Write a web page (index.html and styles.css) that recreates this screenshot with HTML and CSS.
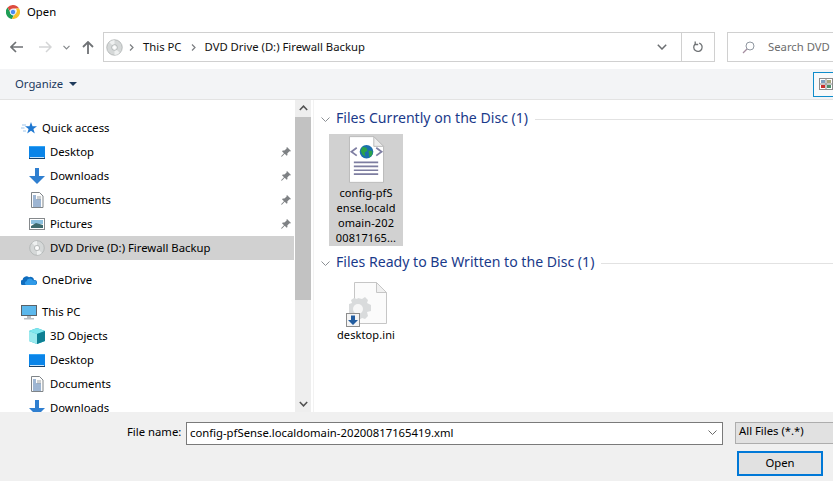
FILE: index.html
```html
<!DOCTYPE html>
<html lang="en">
<head>
<meta charset="utf-8">
<title>Open</title>
<link rel="stylesheet" href="styles.css">
</head>
<body>
<svg class="defs" width="0" height="0" aria-hidden="true">
  <defs>
    <symbol id="disc" viewBox="0 0 18 18">
      <circle cx="9" cy="9" r="8.2" fill="#d5d8d8" stroke="#a9adad" stroke-width=".8"/>
      <path d="M9 9 3.500 3.500A8 8 0 0 1 9 1Z" fill="#eef0f0"/>
      <path d="M9 9 14.500 14.500A8 8 0 0 1 9 17Z" fill="#eef0f0"/>
      <circle cx="9" cy="9" r="3" fill="#f4f5f5" stroke="#9da2a2" stroke-width=".7"/>
      <circle cx="9" cy="9" r="1.200" fill="#fff"/>
    </symbol>
    <symbol id="desktop" viewBox="0 0 16 14">
      <rect x="0" y="1" width="16" height="12" fill="#0a84e8"/>
      <rect x="0" y="1" width="16" height="1" fill="#35a4f4"/>
      <rect x="1" y="12" width="14" height="1" fill="#c8e4fa"/>
      <rect x="0" y="13" width="16" height="1" fill="#1c3f63"/>
    </symbol>
    <symbol id="down" viewBox="0 0 16 16">
      <path d="M6 0h4v8h6l-8 8-8-8h6Z" fill="#2f7fd0"/>
    </symbol>
    <symbol id="doc" viewBox="0 0 14 16">
      <path d="M1.500.5h8l3.500 3.500v11.500h-11.500Z" fill="#fdfdfd" stroke="#7f8488"/>
      <path d="M3 4h3M3 6h3M3 8h8M3 10h8M3 12h8M3 14h8" stroke="#3f6fa8"/>
      <path d="M7 5h4M7 7h4" stroke="#9aa0a4"/>
    </symbol>
    <symbol id="pin" viewBox="0 0 10 10">
      <path d="M6 0l4 4-1 .6-.6-.3L6.300 6.400l.2 1.600-.8.8-2-2L.8 9.800 0 9.200l3-3-2-2 .8-.8 1.600.2L5.700 1.600l-.3-.6Z" fill="#7e8184"/>
    </symbol>
  </defs>
</svg>

<header class="title-bar">
  <svg class="chrome" viewBox="0 0 14 14" width="14" height="14" aria-hidden="true">
    <path d="M7 0a7 7 0 0 1 6.100 3.500H7a3.500 3.500 0 0 0-3.300 2.400L1.500 2.500A7 7 0 0 1 7 0Z" fill="#dd4b3e"/>
    <path d="M1.500 2.500 4 7a3.500 3.500 0 0 0 3.800 3.400L5.900 13.900A7 7 0 0 1 1.500 2.500Z" fill="#1f9d55"/>
    <path d="M13.100 3.500A7 7 0 0 1 5.900 13.900l3-4.800A3.500 3.500 0 0 0 9.700 3.500Z" fill="#f6c32c"/>
    <circle cx="7" cy="7" r="2.700" fill="#4b8bf0" stroke="#fff" stroke-width=".7"/>
  </svg>
  <span class="title-text">Open</span>
</header>

<nav class="nav-row">
  <div class="nav-buttons">
    <svg class="nav-back" viewBox="0 0 13 12" width="13" height="12" aria-hidden="true"><path d="M6 1 1 6l5 5M1 6h12" fill="none" stroke="#6f7275" stroke-width="1.700"/></svg>
    <svg class="nav-fwd" viewBox="0 0 13 12" width="13" height="12" aria-hidden="true"><path d="M7 1l5 5-5 5M12 6H0" fill="none" stroke="#d4d5d6" stroke-width="1.500"/></svg>
    <svg class="nav-recent" viewBox="0 0 7 5" width="7" height="5" aria-hidden="true"><path d="M.5.800 3.500 3.800 6.500.800" fill="none" stroke="#85888b" stroke-width="1.200"/></svg>
    <svg class="nav-up" viewBox="0 0 12 13" width="12" height="13" aria-hidden="true"><path d="M1 6l5-5 5 5M6 1v12" fill="none" stroke="#6f7275" stroke-width="1.800"/></svg>
  </div>
  <div class="address">
    <svg class="addr-disc" width="17" height="17" aria-hidden="true"><use href="#disc"/></svg>
    <svg class="crumb-sep first" viewBox="0 0 5 7" width="5" height="7" aria-hidden="true"><path d="M1 .5 4 3.500 1 6.500" fill="none" stroke="#7b7e81" stroke-width="1.200"/></svg>
    <span class="crumb">This PC</span>
    <svg class="crumb-sep" viewBox="0 0 5 7" width="5" height="7" aria-hidden="true"><path d="M1 .5 4 3.500 1 6.500" fill="none" stroke="#7b7e81" stroke-width="1.200"/></svg>
    <span class="crumb">DVD Drive (D:) Firewall Backup</span>
    <svg class="addr-drop" viewBox="0 0 10 6" width="10" height="6" aria-hidden="true"><path d="M.8.800 5 5 9.200.800" fill="none" stroke="#6b6e71" stroke-width="1.500"/></svg>
    <div class="addr-refresh">
      <svg viewBox="0 0 12 12" width="12" height="12" aria-hidden="true"><path d="M7.200 2.200A4.200 4.200 0 1 1 3 3.200" fill="none" stroke="#6f7275" stroke-width="1.300"/><path d="M3.200 .5v3h3" fill="none" stroke="#6f7275" stroke-width="1.300"/></svg>
    </div>
  </div>
  <div class="search">
    <svg viewBox="0 0 13 13" width="13" height="13" aria-hidden="true"><circle cx="8" cy="5" r="4" fill="none" stroke="#8f97a0"/><path d="M5 8 1 12" stroke="#a58ea0" stroke-width="1.200"/></svg>
    <span class="search-text">Search DVD</span>
  </div>
</nav>

<div class="toolbar">
  <span class="organize">Organize</span>
  <svg class="caret" viewBox="0 0 8 4" width="8" height="4" aria-hidden="true"><path d="M0 0h8L4 4Z" fill="#1f3a5c"/></svg>
  <div class="view-btn">
    <svg viewBox="0 0 14 12" width="14" height="12" aria-hidden="true">
      <rect x=".5" y=".5" width="13" height="11" fill="#fff" stroke="#8c8c8c"/>
      <path d="M7 .5v11M.5 6h13" stroke="#8c8c8c"/>
      <rect x="2" y="2" width="4" height="3" fill="#7d9fbf"/><rect x="8" y="2" width="4" height="3" fill="#a7a57c"/>
      <rect x="2" y="7" width="4" height="3" fill="#c9302c"/><rect x="8" y="7" width="4" height="3" fill="#4f8f6a"/>
    </svg>
  </div>
</div>

<main class="main">
  <aside class="tree">
    <ul class="tree-list">
      <li class="row root">
        <svg class="ic" viewBox="0 0 16 15" width="16" height="15" aria-hidden="true"><path d="M10 1l1.500 4.300H16l-3.600 2.700 1.400 4.500L10 9.800 6.200 12.500 7.600 8 4 5.300h4.500Z" fill="#1f78d1"/><path d="M5 4H1M3.500 7H0M5 10H2" stroke="#9cc4ea"/></svg>
        <span>Quick access</span>
      </li>
      <li class="row child"><svg class="ic" width="16" height="14" aria-hidden="true"><use href="#desktop"/></svg><span>Desktop</span><svg class="pin" width="10" height="10" aria-hidden="true"><use href="#pin"/></svg></li>
      <li class="row child"><svg class="ic" width="16" height="16" aria-hidden="true"><use href="#down"/></svg><span>Downloads</span><svg class="pin" width="10" height="10" aria-hidden="true"><use href="#pin"/></svg></li>
      <li class="row child"><svg class="ic ic-doc" width="14" height="16" aria-hidden="true"><use href="#doc"/></svg><span>Documents</span><svg class="pin" width="10" height="10" aria-hidden="true"><use href="#pin"/></svg></li>
      <li class="row child">
        <svg class="ic" viewBox="0 0 16 14" width="16" height="14" aria-hidden="true"><rect x=".5" y="1.500" width="15" height="11" fill="#fff" stroke="#85898c"/><rect x="2" y="3" width="12" height="4" fill="#8cc0de"/><path d="M2 9l5-3 7 2v3H2Z" fill="#3d6a6e"/></svg>
        <span>Pictures</span><svg class="pin" width="10" height="10" aria-hidden="true"><use href="#pin"/></svg>
      </li>
      <li class="row child selected"><svg class="ic" width="16" height="16" aria-hidden="true"><use href="#disc"/></svg><span>DVD Drive (D:) Firewall Backup</span></li>
      <li class="row root spaced">
        <svg class="ic" viewBox="0 0 16 10" width="16" height="10" aria-hidden="true"><path d="M2 10A2.500 2.500 0 0 1 1.500 5 4 4 0 0 1 8 2.200 3.500 3.500 0 0 1 13 5a2.500 2.500 0 0 1 1 5Z" fill="#0f6cbd"/><path d="M5 10a2 2 0 0 1 .5-3.800A3.500 3.500 0 0 1 12 5.500a2.300 2.300 0 0 1 2 4.500Z" fill="#2f9ae8"/></svg>
        <span>OneDrive</span>
      </li>
      <li class="row root spaced">
        <svg class="ic" viewBox="0 0 16 15" width="16" height="15" aria-hidden="true"><rect x=".5" y=".5" width="15" height="10" fill="#5cb8ec" stroke="#5a6268"/><path d="M6 11h4v2H6ZM3 13h10v1.500H3Z" fill="#b9bec2"/></svg>
        <span>This PC</span>
      </li>
      <li class="row child">
        <svg class="ic" viewBox="0 0 16 16" width="16" height="16" aria-hidden="true"><path d="M8 0l8 3v10l-8 3-8-3V3Z" fill="#22b9c9"/><path d="M0 3l8 3 8-3-8-3Z" fill="#7fe6ee"/><path d="M8 6l8-3v10l-8 3Z" fill="#0e7f93"/><path d="M0 3l8 3v10l-8-3Z" fill="#9ae9ee"/></svg>
        <span>3D Objects</span>
      </li>
      <li class="row child"><svg class="ic" width="16" height="14" aria-hidden="true"><use href="#desktop"/></svg><span>Desktop</span></li>
      <li class="row child"><svg class="ic ic-doc" width="14" height="16" aria-hidden="true"><use href="#doc"/></svg><span>Documents</span></li>
      <li class="row child"><svg class="ic" width="16" height="16" aria-hidden="true"><use href="#down"/></svg><span>Downloads</span></li>
    </ul>
  </aside>
  <div class="scrollbar">
    <svg class="sb-arrow" viewBox="0 0 9 6" width="9" height="6" aria-hidden="true"><path d="M.8 5 4.500 1.200 8.200 5" fill="none" stroke="#505050" stroke-width="1.500"/></svg>
    <div class="sb-thumb"></div>
    <div class="sb-track"></div>
    <svg class="sb-arrow" viewBox="0 0 9 6" width="9" height="6" aria-hidden="true"><path d="M.8 1 4.500 4.800 8.200 1" fill="none" stroke="#505050" stroke-width="1.500"/></svg>
  </div>
  <section class="files">
    <div class="group-head">
      <svg viewBox="0 0 9 5" width="9" height="5" aria-hidden="true"><path d="M.5.500 4.500 4.500 8.500.500" fill="none" stroke="#8b8f94"/></svg>
      <span class="group-title">Files Currently on the Disc (1)</span>
      <span class="group-line"></span>
    </div>
    <div class="file selected">
      <svg class="file-icon" viewBox="0 0 38 48" width="37" height="47" aria-hidden="true">
        <path d="M1.500 .5h25l10 10v37h-35Z" fill="#fff" stroke="#b9b9b9"/>
        <path d="M26.500 .5v10h10Z" fill="#ececec" stroke="#b9b9b9"/>
        <path d="M9 12 3.500 16 9 20M29 12 34.500 16 29 20" fill="none" stroke="#7f7fa3" stroke-width="1.800"/>
        <circle cx="19" cy="16" r="7" fill="#1b6fae"/>
        <path d="M15 11l4 1 1 3-3 2 1 4-3-2-2-4ZM21 15l4 0 0 4-3 3Z" fill="#2aa34a"/>
        <path d="M6 27h25M6 31h25M6 35h25M6 39h25" stroke="#7d7da0" stroke-width="1.700"/>
      </svg>
      <span class="file-name">config-pfS<br>ense.locald<br>omain-202<br>00817165...</span>
    </div>
    <div class="group-head second">
      <svg viewBox="0 0 9 5" width="9" height="5" aria-hidden="true"><path d="M.5.500 4.500 4.500 8.500.500" fill="none" stroke="#8b8f94"/></svg>
      <span class="group-title">Files Ready to Be Written to the Disc (1)</span>
      <span class="group-line"></span>
    </div>
    <div class="file">
      <span class="ini-wrap">
        <svg class="file-icon" viewBox="0 0 41 45" width="41" height="45" aria-hidden="true">
          <path d="M8.500 .5h22l10 10v31h-32Z" fill="#fbfbfb" stroke="#c6c6c6"/>
          <path d="M30.500 .5v10h10Z" fill="#f0f0f0" stroke="#c6c6c6"/>
          <path d="M12 16l4 1 3-2 3 3-1 3 4 2v6l-4 1 1 4-3 3-3-1-3 2-6-1-1-3-3-1V22l3-1-1-3 3-2 3 1Z" fill="#d9dbdc"/>
          <circle cx="12" cy="27" r="5" fill="#f7f7f7"/>
          <rect x=".5" y="31.500" width="13" height="13" fill="#f4f4f4" stroke="#8d8d8d"/>
          <path d="M5 33.500h4v4.500h3L7 43l-5-5h3Z" fill="#235da0"/>
        </svg>
      </span>
      <span class="file-name">desktop.ini</span>
    </div>
  </section>
</main>

<footer class="footer">
  <div class="name-row">
    <label class="name-label">File name:</label>
    <div class="name-input">
      <span class="name-value">config-pfSense.localdomain-20200817165419.xml</span>
      <svg viewBox="0 0 9 5" width="9" height="5" aria-hidden="true"><path d="M.5.500 4.500 4.500 8.500.500" fill="none" stroke="#6a6a6a"/></svg>
    </div>
    <div class="filter">All Files (*.*)</div>
  </div>
  <div class="action-row">
    <button class="open-btn" type="button">Open</button>
  </div>
</footer>
</body>
</html>
```
FILE: styles.css
```css
* { box-sizing: border-box; }
html, body { margin: 0; padding: 0; }
body {
  width: 833px;
  height: 481px;
  overflow: hidden;
  display: flex;
  flex-direction: column;
  background: #fff;
  color: #000;
  font-family: "Noto Sans", "Open Sans", sans-serif;
  font-size: 11.3px;
}
svg { display: block; flex: none; }
.defs { position: absolute; }

.title-bar {
  height: 32px;
  flex: none;
  display: flex;
  align-items: flex-start;
  padding: 4px 0 0 6px;
}
.chrome { margin-top: 1px; }
.title-text { margin-left: 7px; line-height: 16px; }

.nav-row {
  height: 37px;
  flex: none;
  display: flex;
  align-items: flex-start;
}
.nav-buttons {
  width: 103px;
  height: 30px;
  flex: none;
  display: flex;
  align-items: center;
  padding-left: 10px;
}
.nav-fwd { margin-left: 16px; }
.nav-recent { margin-left: 11px; }
.nav-up { margin-left: 12px; }

.address {
  width: 612px;
  height: 30px;
  flex: none;
  border: 1px solid #d0d0d0;
  display: flex;
  align-items: center;
  padding-left: 2px;
}
.crumb-sep { margin: 0 9px 0 9px; }
.crumb-sep.first { margin-left: 6px; margin-right: 9px; }
.crumb { line-height: 15px; white-space: nowrap; color: #111; margin-top: -2px; }
.addr-drop { margin-left: auto; margin-right: 14px; }
.addr-refresh {
  width: 33px;
  height: 100%;
  border-left: 1px solid #d0d0d0;
  display: flex;
  align-items: center;
  justify-content: center;
}
.search {
  margin-left: 12px;
  flex: 1;
  height: 30px;
  border: 1px solid #d0d0d0;
  border-right: 0;
  display: flex;
  align-items: center;
  padding-left: 14px;
  gap: 13px;
  white-space: nowrap;
  color: #6d6d6d;
}
.search-text { margin-top: -2px; }

.toolbar {
  height: 31px;
  flex: none;
  background: #f3f4f6;
  border-bottom: 1px solid #e3e3e3;
  display: flex;
  align-items: center;
  padding: 0 0 2px 15px;
  color: #1c3a5e;
}
.caret { margin-left: 6px; margin-top: 2px; }
.view-btn {
  margin-left: auto;
  margin-top: 2px;
  width: 20px;
  height: 25px;
  border: 1px solid #0f8ccb;
  border-right: 0;
  background: #f8f9fa;
  padding: 5px 0 0 5px;
  overflow: hidden;
}

.main {
  flex: 1;
  min-height: 0;
  display: flex;
}
.tree {
  width: 295px;
  flex: none;
  overflow: hidden;
}
.tree-list {
  list-style: none;
  margin: 0;
  padding: 16px 0 0;
}
.row {
  height: 24px;
  display: flex;
  align-items: center;
  white-space: nowrap;
}
.row span { margin-top: -1px; }
.row.root { padding-left: 21px; }
.row.child { padding-left: 29px; }
.row.spaced { margin-top: 8px; }
.row .ic { margin-right: 5px; }
.row.selected { background: #d1d1d1; margin-right: 1px; }
.row .ic-doc { margin-left: 1px; margin-right: 6px; }
.pin { margin-left: auto; margin-right: 4px; }

.scrollbar {
  width: 16px;
  flex: none;
  background: #eeeeee;
  display: flex;
  flex-direction: column;
  align-items: center;
}
.sb-arrow { margin: 5px 0; }
.sb-thumb { width: 100%; height: 183px; background: #c2c2c2; margin-top: 1px; }
.sb-track { flex: 1; }

.files {
  flex: 1;
  min-width: 0;
  margin-left: 2px;
  border-left: 1px solid #f2f2f2;
  padding: 9px 0 0 7px;
}
.group-head {
  height: 20px;
  display: flex;
  align-items: center;
}
.group-head.second { margin-top: 7px; }
.group-title {
  margin-left: 6px;
  margin-top: -2px;
  font-size: 14.1px;
  line-height: 20px;
  color: #1a3a8a;
  white-space: nowrap;
}
.group-line {
  flex: 1;
  height: 1px;
  margin-left: 7px;
  background: #e2e2e2;
}
.file {
  width: 74px;
  margin: 5px 0 0 8px;
  padding-top: 2px;
  display: flex;
  flex-direction: column;
  align-items: center;
  text-align: center;
  font-size: 11px;
  letter-spacing: .1px;
  line-height: 15px;
  white-space: nowrap;
}
.file.selected { background: #d1d1d1; height: 112px; }
.file-name { margin-top: 0; }
.file.selected .file-name { margin-top: 2px; }
.ini-wrap { display: block; margin-top: 2px; }

.footer {
  height: 69px;
  flex: none;
  background: #f0f0f0;
  padding-top: 10px;
}
.name-row {
  display: flex;
  align-items: flex-start;
  padding-left: 127px;
}
.name-label { width: 59px; line-height: 20px; white-space: nowrap; }
.name-input {
  width: 537px;
  height: 23px;
  flex: none;
  border: 1px solid #7a7a7a;
  background: #fff;
  display: flex;
  align-items: center;
  justify-content: space-between;
  padding: 0 5px 2px 3px;
  white-space: nowrap;
}
.filter {
  margin-left: 12px;
  flex: 1;
  height: 22px;
  background: #e1e1e1;
  border: 1px solid #adadad;
  border-right: 0;
  line-height: 16px;
  padding-left: 3px;
  white-space: nowrap;
}
.action-row { padding: 6px 0 0 737px; }
.open-btn {
  width: 86px;
  height: 25px;
  display: block;
  background: #e1e1e1;
  border: 2px solid #0078d7;
  font: inherit;
  color: #000;
  padding: 0 0 2px;
}
```
